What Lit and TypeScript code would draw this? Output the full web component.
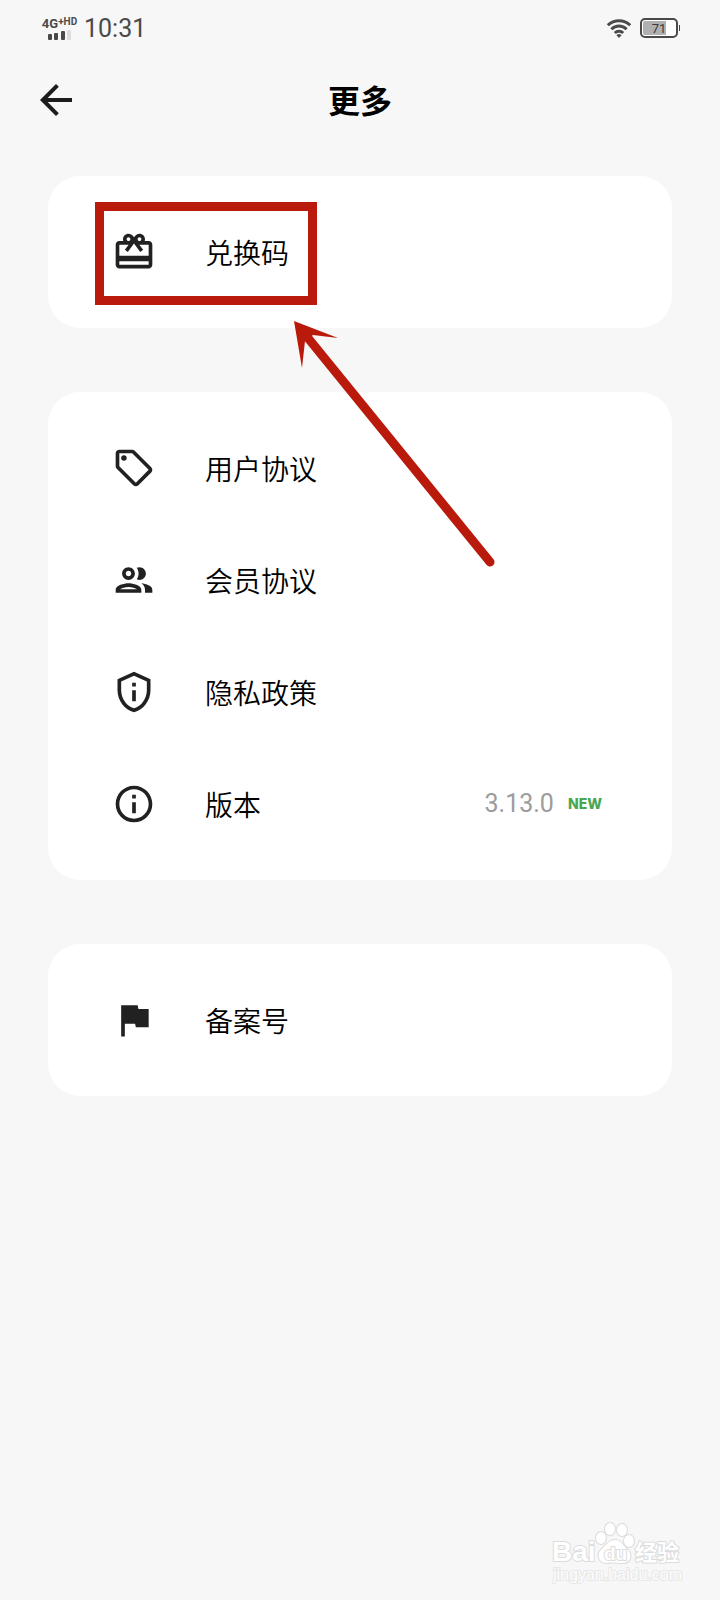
import { LitElement, html, css, svg, nothing } from "lit";
import { customElement, property } from "lit/decorators.js";

type IconName = "gift" | "tag" | "people" | "shield" | "info" | "flag" | "back";

const ICONS: Record<IconName, string> = {
  gift: "M20 6h-2.18c.11-.31.18-.65.18-1 0-1.66-1.34-3-3-3-1.05 0-1.96.54-2.5 1.35l-.5.67-.5-.68C10.96 2.54 10.05 2 9 2 7.34 2 6 3.34 6 5c0 .35.07.69.18 1H4c-1.11 0-1.99.89-1.99 2L2 19c0 1.11.89 2 2 2h16c1.11 0 2-.89 2-2V8c0-1.11-.89-2-2-2zm-5-2c.55 0 1 .45 1 1s-.45 1-1 1-1-.45-1-1 .45-1 1-1zM9 4c.55 0 1 .45 1 1s-.45 1-1 1-1-.45-1-1 .45-1 1-1zm11 15H4v-2h16v2zm0-5H4V8h5.08L7 10.83 8.62 12 11 8.76l1-1.36 1 1.36L15.38 12 17 10.83 14.92 8H20v6z",
  tag: "M21.41 11.58l-9-9C12.05 2.22 11.55 2 11 2H4c-1.1 0-2 .9-2 2v7c0 .55.22 1.05.59 1.42l9 9c.36.36.86.58 1.41.58s1.05-.22 1.41-.59l7-7c.37-.36.59-.86.59-1.41s-.23-1.06-.59-1.42zM13 20.01L4 11V4h7v-.01l9 9-7 7.02zM6.5 5a1.5 1.5 0 1 0 0 3 1.5 1.5 0 0 0 0-3z",
  people: "M9 13.75c-2.34 0-7 1.17-7 3.5V19h14v-1.75c0-2.33-4.66-3.5-7-3.5zM4.34 17c.84-.58 2.87-1.25 4.66-1.25s3.82.67 4.66 1.25H4.34zM9 12c1.93 0 3.5-1.57 3.5-3.5S10.93 5 9 5 5.5 6.57 5.5 8.5 7.07 12 9 12zm0-5c.83 0 1.5.67 1.5 1.5S9.83 10 9 10s-1.5-.67-1.5-1.5S8.17 7 9 7zm7.04 6.81c1.16.84 1.96 1.96 1.96 3.44V19h4v-1.75c0-2.02-3.5-3.17-5.96-3.44zM15 12c1.93 0 3.5-1.57 3.5-3.5S16.93 5 15 5c-.54 0-1.04.13-1.5.35.63.89 1 1.98 1 3.15s-.37 2.26-1 3.15c.46.22.96.35 1.5.35z",
  shield: "M12 1L3 5v6c0 5.55 3.84 10.74 9 12 5.16-1.26 9-6.45 9-12V5l-9-4zm7 10c0 4.52-2.98 8.69-7 9.93-4.02-1.24-7-5.41-7-9.93V6.3l7-3.11 7 3.11V11zM11 7h2v2h-2zM11 11h2v6h-2z",
  info: "M11 7h2v2h-2zM11 11h2v6h-2zM12 2C6.48 2 2 6.48 2 12s4.48 10 10 10 10-4.48 10-10S17.52 2 12 2zm0 18c-4.41 0-8-3.59-8-8s3.59-8 8-8 8 3.59 8 8-3.59 8-8 8z",
  flag: "M14.4 6L14 4H5v17h2v-7h5.6l.4 2h7V6z",
  back: "M20 11H7.83l5.59-5.59L12 4l-8 8 8 8 1.41-1.41L7.83 13H20v-2z",
};

const icon = (name: IconName) => html`
  <svg class="icon" viewBox="0 0 24 24" aria-hidden="true">
    ${svg`<path fill-rule="evenodd" d=${ICONS[name]}></path>`}
  </svg>
`;

@customElement("status-bar")
class StatusBar extends LitElement {
  static styles = css`
    :host {
      display: flex;
      align-items: center;
      justify-content: space-between;
      height: 56px;
      padding: 0 40px 0 41px;
      color: #4a4a4a;
      font-family: Roboto, "Noto Sans", sans-serif;
    }
    .group {
      display: flex;
      align-items: center;
      gap: 6px;
    }
    .network {
      display: flex;
      flex-direction: column;
      align-items: center;
      width: 37px;
    }
    .carrier {
      display: flex;
      font-size: 13px;
      font-weight: 700;
      line-height: 13px;
      white-space: nowrap;
    }
    .sup {
      font-size: 10px;
      line-height: 10px;
    }
    .time {
      padding-top: 2px;
      font-size: 25px;
      line-height: 32px;
    }
    .status-icons {
      display: flex;
      align-items: center;
      gap: 8px;
    }
    svg {
      display: block;
    }
    .level {
      font: 400 13px Roboto, sans-serif;
    }
  `;

  render() {
    return html`
      <div class="group">
        <div class="network">
          <div class="carrier">4G<span class="sup">+</span><span class="sup">HD</span></div>
          <svg width="24" height="10" viewBox="0 0 24 10" aria-hidden="true">
            <rect x="0" y="4" width="4" height="6" rx="1" fill="#4a4a4a" />
            <rect x="6" y="3" width="4" height="7" rx="1" fill="#4a4a4a" />
            <rect x="13" y="1" width="4" height="9" rx="1" fill="#4a4a4a" />
            <rect x="19" y="0" width="4" height="10" rx="1" fill="#dcdcdc" />
          </svg>
        </div>
        <span class="time">10:31</span>
      </div>
      <div class="status-icons">
        <svg width="26" height="20" viewBox="0 0 26 20" aria-hidden="true">
          <g fill="none" stroke="#4a4a4a" stroke-width="3">
            <path d="M1.8 7.2a16 16 0 0 1 22.4 0" />
            <path d="M5.4 11.2a10.8 10.8 0 0 1 15.2 0" />
            <path d="M8.8 15a6 6 0 0 1 8.4 0" />
          </g>
          <path fill="#4a4a4a" d="M13 20l-2.6-2.8a3.7 3.7 0 0 1 5.2 0z" />
        </svg>
        <svg width="40" height="20" viewBox="0 0 40 20" role="img" aria-label="71%">
          <rect x="1" y="1" width="36" height="18" rx="4" fill="#fff" stroke="#4a4a4a" stroke-width="2" />
          <path d="M5 3h21v14H5a2 2 0 0 1-2-2V5a2 2 0 0 1 2-2z" fill="#b0b0b0" />
          <rect x="39" y="7" width="1" height="6" fill="#4a4a4a" />
          <text class="level" x="19" y="15" text-anchor="middle" fill="#3c3c3c">71</text>
        </svg>
      </div>
    `;
  }
}

@customElement("menu-row")
class MenuRow extends LitElement {
  @property() icon: IconName = "info";
  @property() label = "";
  @property() value = "";
  @property() badge = "";

  static styles = css`
    :host {
      display: block;
    }
    .row {
      display: flex;
      align-items: center;
      gap: 49px;
      height: 112px;
      padding: 0 70px 0 64px;
      color: #000;
      text-decoration: none;
    }
    .icon {
      flex: none;
      width: 44px;
      height: 44px;
      fill: #212121;
    }
    .label {
      flex: 1;
      font-size: 28px;
      font-weight: 350;
      line-height: 40px;
    }
    .detail {
      display: flex;
      align-items: center;
      gap: 14px;
    }
    .value {
      color: #9c9c9c;
      font: 400 25px/40px Roboto, sans-serif;
    }
    .badge {
      color: #4aa750;
      font: 800 14px/20px Inter, sans-serif;
    }
  `;

  render() {
    return html`
      <a class="row" href="#">
        ${icon(this.icon)}
        <span class="label">${this.label}</span>
        ${this.value
          ? html`<span class="detail">
              <span class="value">${this.value}</span>
              <span class="badge">${this.badge}</span>
            </span>`
          : nothing}
      </a>
    `;
  }
}

@customElement("app-root")
class AppRoot extends LitElement {
  static styles = css`
    :host {
      display: block;
      position: relative;
      box-sizing: border-box;
      min-height: 100vh;
      background: #f7f7f7;
      font-family: "Noto Sans CJK SC", sans-serif;
    }
    .header {
      display: grid;
      grid-template-columns: 48px 1fr 48px;
      align-items: center;
      height: 88px;
      padding: 0 32px;
    }
    .back {
      display: block;
      width: 48px;
      height: 48px;
      padding: 0;
      border: 0;
      background: none;
    }
    .back .icon {
      display: block;
      fill: #1c1c1c;
    }
    .title {
      margin: 0;
      padding-bottom: 2px;
      text-align: center;
      font-size: 32px;
      font-weight: 700;
      line-height: 44px;
    }
    .content {
      display: flex;
      flex-direction: column;
      gap: 64px;
      padding: 32px 48px;
    }
    .card {
      position: relative;
      padding: 20px 0;
      border-radius: 32px;
      background: #fff;
    }
    .highlight {
      position: absolute;
      z-index: 1;
      top: 26px;
      left: 47px;
      box-sizing: border-box;
      width: 222px;
      height: 103px;
      border: 9px solid #b91a0c;
      pointer-events: none;
    }
    .pointer {
      position: absolute;
      z-index: 1;
      top: 144px;
      left: 246px;
      pointer-events: none;
    }
    .watermark {
      position: absolute;
      right: 36px;
      bottom: 12px;
    }
    .brand {
      font: 700 28px "Liberation Sans", sans-serif;
    }
    .brand-du {
      font: 700 19px "Liberation Sans", sans-serif;
    }
    .brand-cn {
      font: 700 22px "Noto Sans CJK SC", sans-serif;
    }
    .site {
      font: 400 16px "Liberation Sans", sans-serif;
    }
  `;

  render() {
    return html`
      <status-bar></status-bar>
      <header class="header">
        <button class="back" aria-label="返回">${icon("back")}</button>
        <h1 class="title">更多</h1>
      </header>
      <main class="content">
        <section class="card">
          <menu-row icon="gift" label="兑换码"></menu-row>
          <div class="highlight"></div>
          <svg class="pointer" width="206" height="252" viewBox="0 0 206 252" aria-hidden="true">
            <path d="M14 18L196 242" stroke="#b91a0c" stroke-width="9" stroke-linecap="round" />
            <path d="M0 1L44 18L19 15L11 21L8 48Z" fill="#b91a0c" />
          </svg>
        </section>
        <section class="card">
          <menu-row icon="tag" label="用户协议"></menu-row>
          <menu-row icon="people" label="会员协议"></menu-row>
          <menu-row icon="shield" label="隐私政策"></menu-row>
          <menu-row icon="info" label="版本" value="3.13.0" badge="NEW"></menu-row>
        </section>
        <section class="card">
          <menu-row icon="flag" label="备案号"></menu-row>
        </section>
      </main>
      <svg class="watermark" width="132" height="68" viewBox="0 0 132 68" aria-hidden="true">
        <g fill="#fff" stroke="#dcdcdc" stroke-width="2" paint-order="stroke">
          <text class="brand" x="0" y="41">Bai</text>
          <ellipse cx="49" cy="18" rx="5" ry="6" />
          <ellipse cx="58" cy="9" rx="5" ry="6" />
          <ellipse cx="70" cy="10" rx="5" ry="6" />
          <ellipse cx="77" cy="21" rx="5" ry="6" />
          <path d="M63 20c6 0 8 5 12 9 6 5 4 14-4 14-5 0-11-1-16 0-8 0-11-8-6-13 4-4 8-10 14-10z" />
          <text class="brand-du" x="52" y="40">du</text>
          <text class="brand-cn" x="83" y="40">经验</text>
        </g>
        <text class="site" x="1" y="60" fill="#fdfdfd" stroke="#e8e8e8" stroke-width="2" paint-order="stroke">jingyan.baidu.com</text>
      </svg>
    `;
  }
}
